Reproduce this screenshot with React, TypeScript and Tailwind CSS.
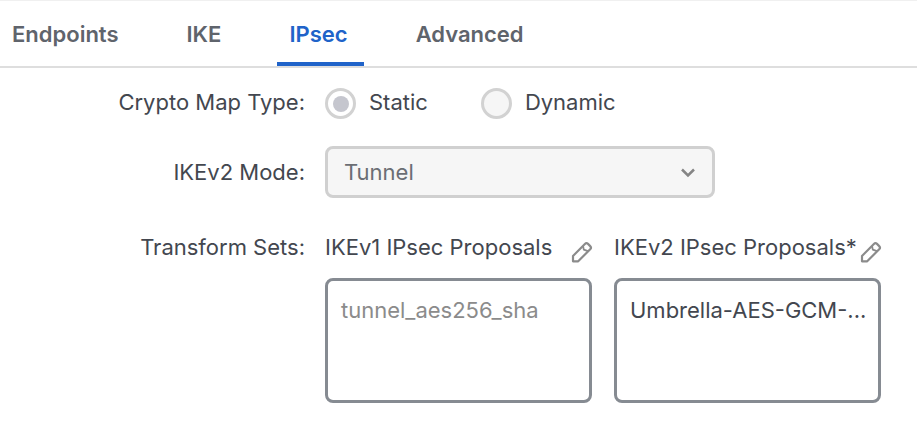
import type { ReactNode } from "react";

const tabs = ["Endpoints", "IKE", "IPsec", "Advanced"];
const activeTab = "IPsec";

function Tabs() {
  return (
    <nav role="tablist" className="flex h-[68px] gap-10 border-t border-b-2 border-t-[#f0f0f0] border-b-[#dedede] font-semibold">
      {tabs.map((tab) => (
        <button
          key={tab}
          type="button"
          role="tab"
          aria-selected={tab === activeTab}
          className={
            tab === activeTab
              ? "rounded-t-xs border-b-4 border-[#2063c9] pt-1 pr-4 pl-3 text-[#2063c9]"
              : "border-b-4 border-transparent pt-1 pr-4 pl-3 text-[#5f646c]"
          }
        >
          {tab}
        </button>
      ))}
    </nav>
  );
}

function Radio({ label, checked = false }: { label: string; checked?: boolean }) {
  return (
    <label className="flex items-start gap-[13px]">
      <input
        type="radio"
        name="crypto-map-type"
        defaultChecked={checked}
        disabled
        className="grid size-[31px] appearance-none place-items-center rounded-full border-3 border-[#d2d2d2] bg-[#f6f6f6] before:size-4 before:rounded-full checked:bg-white checked:before:bg-[#c5c6ce]"
      />
      {label}
    </label>
  );
}

function Pencil() {
  return (
    <svg viewBox="0 0 22 22" className="size-[22px]" fill="none" stroke="#8b8b8b" strokeWidth="2.2" strokeLinejoin="round" aria-hidden="true">
      <path d="M2 20.3v-5.4L13.9 2.9a2.2 2.2 0 0 1 3.1 0l2.2 2.2a2.2 2.2 0 0 1 0 3.1L7.2 20.3z" />
      <path d="M12 5l.8 3.6 4.2 1.6" strokeWidth="1.8" />
    </svg>
  );
}

function Proposals({ id, title, children }: { id: string; title: string; children: ReactNode }) {
  return (
    <section className="w-[267px]">
      <div className="flex h-[45px] items-start justify-between">
        <h2 id={id} className="whitespace-nowrap">{title}</h2>
        <button type="button" aria-label={`Edit ${title}`} className="-mr-px pt-2">
          <Pencil />
        </button>
      </div>
      <ul aria-labelledby={id} className="h-[125px] rounded-lg border-3 border-[#868b92] px-[13px] py-[15px]">
        {children}
      </ul>
    </section>
  );
}

export default function App() {
  return (
    <main className="bg-white font-['Inter',sans-serif] text-[22px] leading-7 text-[#43474f]">
      <Tabs />
      <form className="grid grid-cols-[305px_1fr] gap-x-5 pt-5">
        <span id="map-type" className="text-right">Crypto Map Type:</span>
        <div role="radiogroup" aria-labelledby="map-type" className="flex h-[58px] items-start gap-[53px]">
          <Radio label="Static" checked />
          <Radio label="Dynamic" />
        </div>

        <label htmlFor="mode" className="pt-3 text-right">IKEv2 Mode:</label>
        <div className="grid h-[87px] w-[390px] items-start">
          <select
            id="mode"
            disabled
            className="col-start-1 row-start-1 h-[52px] w-full appearance-none rounded-lg border-3 border-[#d0d0d0] bg-[#f6f6f6] px-4 text-[#6b6e74] opacity-100"
          >
            <option>Tunnel</option>
          </select>
          <svg
            viewBox="0 0 14 10"
            className="pointer-events-none col-start-1 row-start-1 mt-[22px] mr-5 h-[10px] w-[14px] justify-self-end"
            fill="none"
            stroke="#858585"
            strokeWidth="2.5"
            aria-hidden="true"
          >
            <path d="M1 1.5l6 6 6-6" />
          </svg>
        </div>

        <span className="text-right">Transform Sets:</span>
        <div className="flex gap-[22px]">
          <Proposals id="ikev1" title="IKEv1 IPsec Proposals">
            <li className="text-[#8b8b8b]">tunnel_aes256_sha</li>
          </Proposals>
          <Proposals id="ikev2" title="IKEv2 IPsec Proposals*">
            <li className="whitespace-nowrap">Umbrella-AES-GCM-...</li>
          </Proposals>
        </div>
      </form>
    </main>
  );
}
